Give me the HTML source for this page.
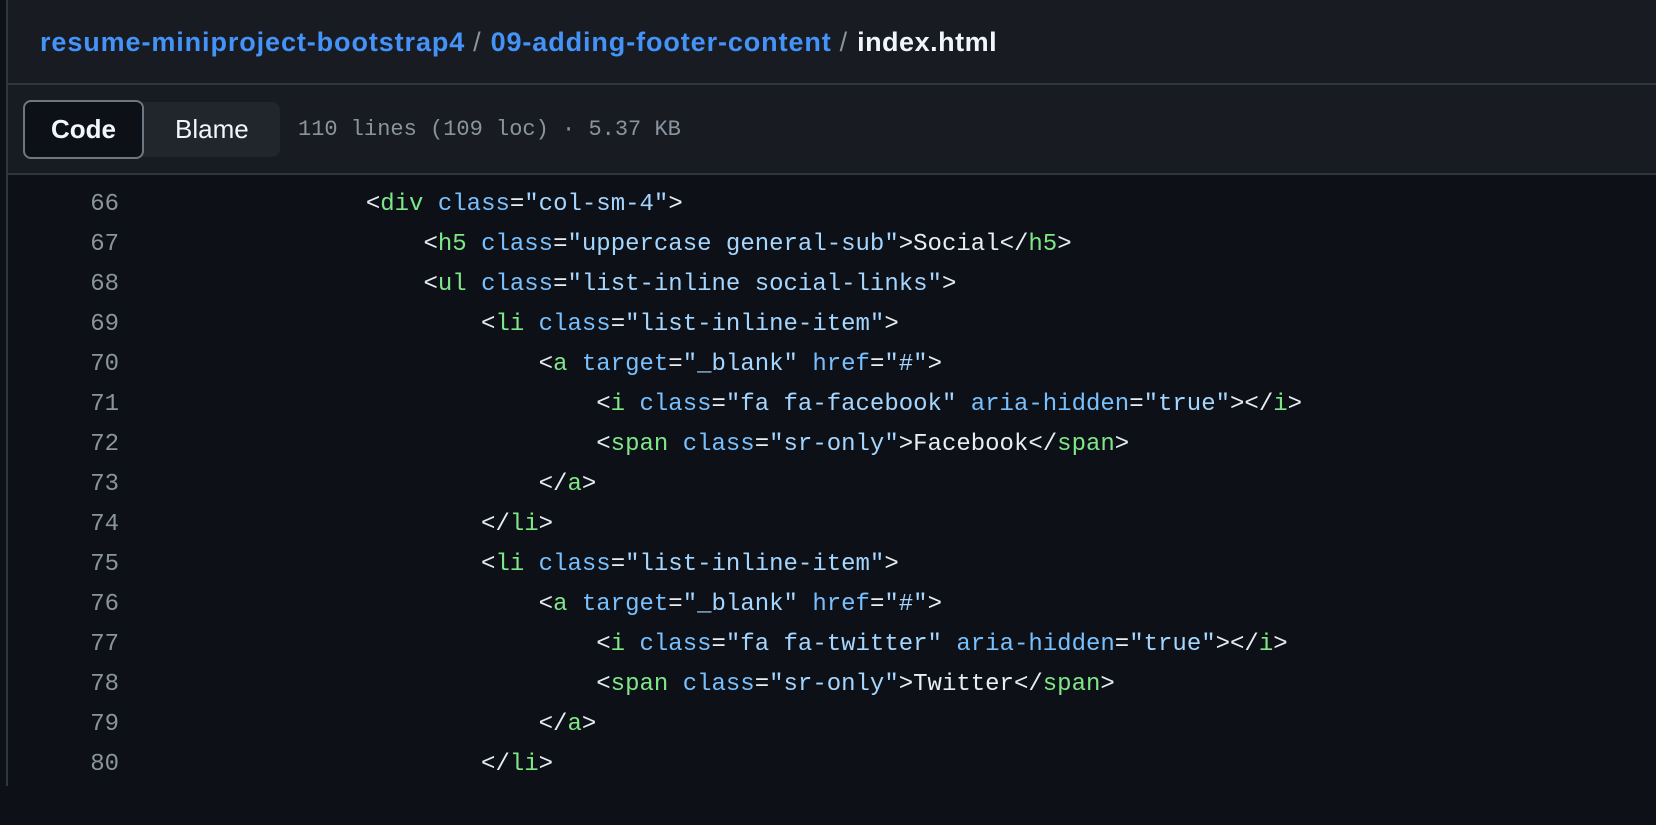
<!DOCTYPE html>
<html><head><meta charset="utf-8"><style>
html,body{margin:0;padding:0;width:1656px;height:786px;overflow:hidden;background:#0d1117;}
.wrap{position:absolute;left:0;top:0;width:1656px;height:786px;}
.lb{position:absolute;left:6px;top:0;width:2px;height:786px;background:#30363d;}
.hdr{position:absolute;left:8px;top:0;right:0;height:175px;background:#181b22;}
.d1{position:absolute;left:8px;right:0;top:83px;height:2px;background:#30363d;}
.d2{position:absolute;left:8px;right:0;top:173px;height:2px;background:#30363d;}
.bc{position:absolute;left:40px;top:27px;font:700 27px "Liberation Sans",sans-serif;color:#4493f8;white-space:nowrap;letter-spacing:0.9px;}
.bc .s{color:#8b949e;font-weight:400;margin:0 9px 0 8px;}
.bc .n{color:#f0f6fc;font-weight:700;letter-spacing:0.5px;}
.seg{position:absolute;left:23px;top:102px;width:257px;height:55px;background:#21262d;border-radius:8px;}
.code{position:absolute;left:23px;top:100px;width:117px;height:55px;background:#0d1117;border:2px solid #6e7681;border-radius:8px;color:#f0f6fc;font:700 26px "Liberation Sans",sans-serif;text-align:center;line-height:55px;}
.blame{position:absolute;left:175px;top:100px;color:#f0f6fc;font:400 26px "Liberation Sans",sans-serif;line-height:59px;}
.info{position:absolute;left:298px;top:100px;color:#8b949e;font:22px "Liberation Mono",monospace;line-height:59px;}
.lines{position:absolute;left:0;top:185px;font:24px/40px "Liberation Mono",monospace;white-space:pre;}
.ln{position:absolute;left:0;width:119px;text-align:right;color:#8b949e;}
.cd{position:absolute;left:193px;color:#e6edf3;}
.t{color:#7ee787}.a{color:#79c0ff}.v{color:#a5d6ff}
</style></head><body><div class="wrap">
<div class="hdr"></div><div class="lb"></div><div class="d1"></div><div class="d2"></div>
<div class="bc">resume-miniproject-bootstrap4<span class="s">/</span>09-adding-footer-content<span class="s">/</span><span class="n">index.html</span></div>
<div class="seg"></div><div class="code">Code</div><div class="blame">Blame</div>
<div class="info">110 lines (109 loc) · 5.37 KB</div>
<div class="lines">
<div class="ln" style="top:0">66</div><div class="cd" style="top:0">            &lt;<span class="t">div</span> <span class="a">class</span>=<span class="v">"col-sm-4"</span>&gt;</div>
<div class="ln" style="top:40px">67</div><div class="cd" style="top:40px">                &lt;<span class="t">h5</span> <span class="a">class</span>=<span class="v">"uppercase general-sub"</span>&gt;Social&lt;/<span class="t">h5</span>&gt;</div>
<div class="ln" style="top:80px">68</div><div class="cd" style="top:80px">                &lt;<span class="t">ul</span> <span class="a">class</span>=<span class="v">"list-inline social-links"</span>&gt;</div>
<div class="ln" style="top:120px">69</div><div class="cd" style="top:120px">                    &lt;<span class="t">li</span> <span class="a">class</span>=<span class="v">"list-inline-item"</span>&gt;</div>
<div class="ln" style="top:160px">70</div><div class="cd" style="top:160px">                        &lt;<span class="t">a</span> <span class="a">target</span>=<span class="v">"_blank"</span> <span class="a">href</span>=<span class="v">"#"</span>&gt;</div>
<div class="ln" style="top:200px">71</div><div class="cd" style="top:200px">                            &lt;<span class="t">i</span> <span class="a">class</span>=<span class="v">"fa fa-facebook"</span> <span class="a">aria-hidden</span>=<span class="v">"true"</span>&gt;&lt;/<span class="t">i</span>&gt;</div>
<div class="ln" style="top:240px">72</div><div class="cd" style="top:240px">                            &lt;<span class="t">span</span> <span class="a">class</span>=<span class="v">"sr-only"</span>&gt;Facebook&lt;/<span class="t">span</span>&gt;</div>
<div class="ln" style="top:280px">73</div><div class="cd" style="top:280px">                        &lt;/<span class="t">a</span>&gt;</div>
<div class="ln" style="top:320px">74</div><div class="cd" style="top:320px">                    &lt;/<span class="t">li</span>&gt;</div>
<div class="ln" style="top:360px">75</div><div class="cd" style="top:360px">                    &lt;<span class="t">li</span> <span class="a">class</span>=<span class="v">"list-inline-item"</span>&gt;</div>
<div class="ln" style="top:400px">76</div><div class="cd" style="top:400px">                        &lt;<span class="t">a</span> <span class="a">target</span>=<span class="v">"_blank"</span> <span class="a">href</span>=<span class="v">"#"</span>&gt;</div>
<div class="ln" style="top:440px">77</div><div class="cd" style="top:440px">                            &lt;<span class="t">i</span> <span class="a">class</span>=<span class="v">"fa fa-twitter"</span> <span class="a">aria-hidden</span>=<span class="v">"true"</span>&gt;&lt;/<span class="t">i</span>&gt;</div>
<div class="ln" style="top:480px">78</div><div class="cd" style="top:480px">                            &lt;<span class="t">span</span> <span class="a">class</span>=<span class="v">"sr-only"</span>&gt;Twitter&lt;/<span class="t">span</span>&gt;</div>
<div class="ln" style="top:520px">79</div><div class="cd" style="top:520px">                        &lt;/<span class="t">a</span>&gt;</div>
<div class="ln" style="top:560px">80</div><div class="cd" style="top:560px">                    &lt;/<span class="t">li</span>&gt;</div>
</div>
</div></body></html>
